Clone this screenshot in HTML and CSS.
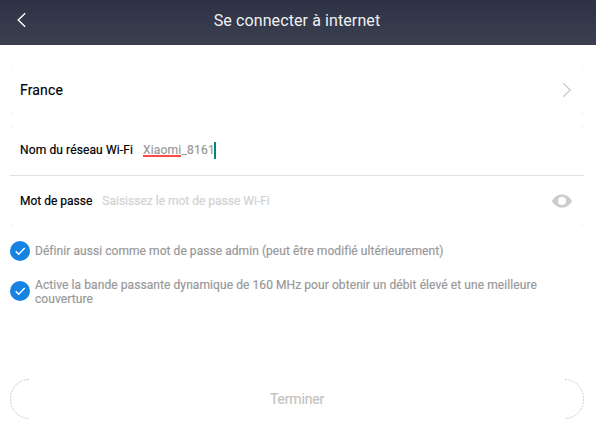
FILE: index.html
```html
<!DOCTYPE html>
<html lang="fr">
<head>
<meta charset="utf-8">
<title>Se connecter à internet</title>
<link rel="stylesheet" href="styles.css">
</head>
<body>
<header class="bar">
  <svg class="back" width="10" height="16" viewBox="0 0 10 16"><path d="M8.2 1.2 1.2 8l7 6.8"/></svg>
  <h1>Se connecter à internet</h1>
</header>
<main>
  <section class="card">
    <svg class="corners" width="574" height="50" viewBox="0 0 574 50"><path d="M.5 2.5 2.5.5M571.5.5l2 2M.5 47.5l2 2M571.5 49.5l2-2"/></svg>
    <div class="row country">
      <span class="name">France</span>
      <svg class="chevron" width="10" height="16" viewBox="0 0 10 16"><path d="M1.2 1.2 8.2 8l-7 6.8"/></svg>
    </div>
  </section>
  <section class="card wifi">
    <svg class="corners" width="574" height="101" viewBox="0 0 574 101"><path d="M.5 2.5 2.5.5M571.5.5l2 2M.5 98.5l2 2M571.5 100.5l2-2"/></svg>
    <div class="row network">
      <span class="label">Nom du réseau Wi-Fi</span>
      <span class="value"><span class="misspelt">Xiaomi</span>_8161</span><i class="caret"></i>
    </div>
    <div class="row password">
      <span class="label">Mot de passe</span>
      <span class="placeholder">Saisissez le mot de passe Wi-Fi</span>
      <svg class="eye" width="20" height="14" viewBox="0 0 20 14"><path d="M0 7C2 3 5.7.4 10 .4S18 3 20 7c-2 4-5.7 6.6-10 6.6S2 11 0 7Z"/><circle cx="10" cy="7" r="4"/></svg>
    </div>
  </section>
  <div class="option">
    <svg class="check" width="20" height="20" viewBox="0 0 20 20"><circle cx="10" cy="10" r="10"/><path d="m5.7 10.2 3 3 6-6.3"/></svg>
    <p class="first">Définir aussi comme mot de passe admin (peut être modifié ultérieurement)</p>
  </div>
  <div class="option second">
    <svg class="check" width="20" height="20" viewBox="0 0 20 20"><circle cx="10" cy="10" r="10"/><path d="m5.7 10.2 3 3 6-6.3"/></svg>
    <p>Active la bande passante dynamique de 160 MHz pour obtenir un débit élevé et une meilleure<br>couverture</p>
  </div>
  <div class="submit">
    <svg width="20" height="40" viewBox="0 0 20 40"><path d="M19 .5C8.500.5.5 9 .5 20S8.500 39.500 19 39.500"/></svg>
    <span>Terminer</span>
    <svg width="20" height="40" viewBox="0 0 20 40"><path d="M1 .5C11.500.5 19.500 9 19.500 20S11.500 39.500 1 39.500"/></svg>
  </div>
</main>
</body>
</html>
```

FILE: styles.css
```css
* { box-sizing: border-box; }
body { margin: 0; background: #fff; font-family: Roboto, sans-serif; font-size: 12px; color: #000; overflow: hidden; }
svg { display: block; flex: none; fill: none; }
.bar { height: 45px; display: grid; grid-template-columns: 30px 1fr 30px; align-items: center; background: linear-gradient(#2d3344, #3a4050); padding-bottom: 5px; }
.back { margin-left: 17px; stroke: #fff; stroke-width: 1.4; }
h1 { margin: 1px 2px 0 0; color: #f0f1f3; font-size: 16px; font-weight: 400; line-height: 20px; letter-spacing: .1px; text-align: center; white-space: nowrap; }
main { padding: 20px 12px 0 10px; }
.card { position: relative; margin-bottom: 10px; }
.corners { position: absolute; inset: 0; stroke: #e0e0e0; stroke-width: .7; }
.row { display: flex; align-items: center; height: 50px; padding: 0 12px 0 10px; white-space: nowrap; }
.name { font-size: 14px; letter-spacing: .15px; -webkit-text-stroke: .15px; }
.chevron { margin-left: auto; stroke: #c8c8c8; stroke-width: 1.2; }
.network { height: 51px; border-bottom: 1px solid #dfdfdf; }
.label { margin-right: 10px; -webkit-text-stroke: .2px; }
.network .label { letter-spacing: .12px; }
.value { color: #999; letter-spacing: .2px; -webkit-text-stroke: .2px; }
.misspelt { box-shadow: inset 0 -2px #ff4848; }
.caret { width: 2px; height: 17px; margin-left: -1px; background: #00897b; }
.placeholder { color: #d2d2d2; -webkit-text-stroke: .2px; }
.eye { margin-left: auto; fill: #ccc; }
.eye circle { fill: #fff; }
.wifi { margin-bottom: 15px; }
.option { display: flex; align-items: center; height: 20px; color: #999; }
.option p { margin: 1px 0 0 5px; line-height: 14px; letter-spacing: .08px; white-space: nowrap; -webkit-text-stroke: .2px; }
.option .first { margin-top: 0; letter-spacing: .06px; }
.second { margin-top: 20px; }
.check circle { fill: #1683e2; }
.check path { stroke: #fff; stroke-width: 1.4; }
.submit { display: flex; align-items: center; justify-content: space-between; width: 574px; height: 40px; margin-top: 78px; color: #c2c2c2; font-size: 14px; }
.submit span { letter-spacing: -.15px; -webkit-text-stroke: .15px; }
.submit svg { stroke: #bbb; stroke-width: .7; stroke-dasharray: 2 1; }
```
